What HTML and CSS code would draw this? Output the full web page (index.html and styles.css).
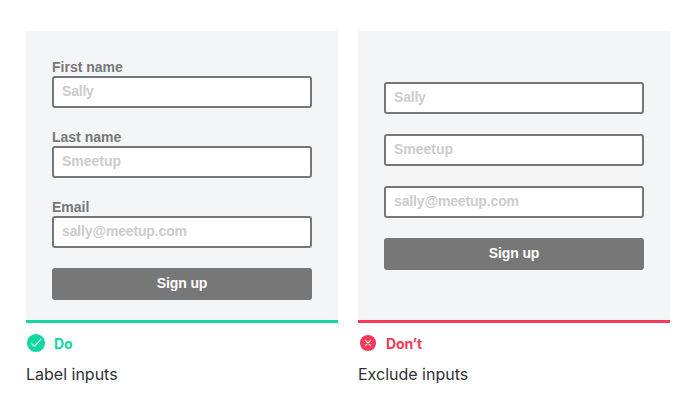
FILE: index.html
```html
<!DOCTYPE html>
<html lang="en">
<head>
<meta charset="utf-8">
<title>Form labels</title>
<link rel="stylesheet" href="styles.css">
</head>
<body>
<main class="examples">
  <section class="example do">
    <div class="panel">
      <form class="form">
        <div class="field"><label class="label">First name</label><div class="input short">Sally</div></div>
        <div class="field"><label class="label">Last name</label><div class="input">Smeetup</div></div>
        <div class="field"><label class="label">Email</label><div class="input email">sally@meetup.com</div></div>
        <div class="button">Sign up</div>
      </form>
    </div>
    <div class="verdict">
      <svg class="icon" viewBox="0 0 20 20"><circle cx="10" cy="10" r="9.1"/><path d="M5.4 10.3l3.1 3.2 6.2-7.1"/></svg>
      <span>Do</span>
    </div>
    <p class="caption">Label inputs</p>
  </section>
  <section class="example dont">
    <div class="panel">
      <form class="form">
        <div class="input short">Sally</div>
        <div class="input">Smeetup</div>
        <div class="input email">sally@meetup.com</div>
        <div class="button">Sign up</div>
      </form>
    </div>
    <div class="verdict">
      <svg class="icon" viewBox="0 0 20 20"><circle cx="10" cy="10" r="8.1"/><path d="M7.4 7.4l5.2 5.2M12.6 7.4l-5.2 5.2"/></svg>
      <span>Don’t</span>
    </div>
    <p class="caption">Exclude inputs</p>
  </section>
</main>
</body>
</html>
```
FILE: styles.css
```css
* { box-sizing: border-box; }
body { margin: 0; background: #fff; font-family: "Liberation Sans", Arial, sans-serif; }
.examples { display: grid; grid-template-columns: 312px 312px; gap: 20px; padding: 31px 26px 0; }
.panel { height: 292px; padding: 27px 26px 0; background: #f4f5f7; border-bottom: 3px solid var(--accent); border-radius: 1px 1px 0 0; }
.do { --accent: #11d8a2; }
.dont { --accent: #f5395b; }
.dont .panel { padding-top: 51px; }
.form { display: flex; flex-direction: column; gap: 20px; }
.field { display: flex; flex-direction: column; }
.label { height: 18px; line-height: 18px; font-size: 14px; font-weight: 700; color: #777; }
.input, .button { height: 32px; line-height: 26px; border: 2px solid #777; border-radius: 3px; font-size: 14px; font-weight: 700; }
.input { padding: 0 8px; background: #fff; color: #ccc; }
.short { letter-spacing: -0.2px; }
.email { letter-spacing: -0.15px; }
.button { background: #777; color: #fff; text-align: center; letter-spacing: -0.1px; }
.verdict { display: flex; align-items: center; gap: 8px; height: 20px; margin-top: 10px; color: var(--accent); font-family: Inter, sans-serif; font-size: 14px; font-weight: 700; letter-spacing: -0.1px; }
.icon { width: 20px; height: 20px; fill: var(--accent); }
.icon path { fill: none; stroke: #fff; stroke-width: 1.1; stroke-linecap: round; stroke-linejoin: round; }
.caption { margin: 11px 0 0; line-height: 20px; font-family: Inter, sans-serif; font-size: 16px; color: #2e3136; }
```
